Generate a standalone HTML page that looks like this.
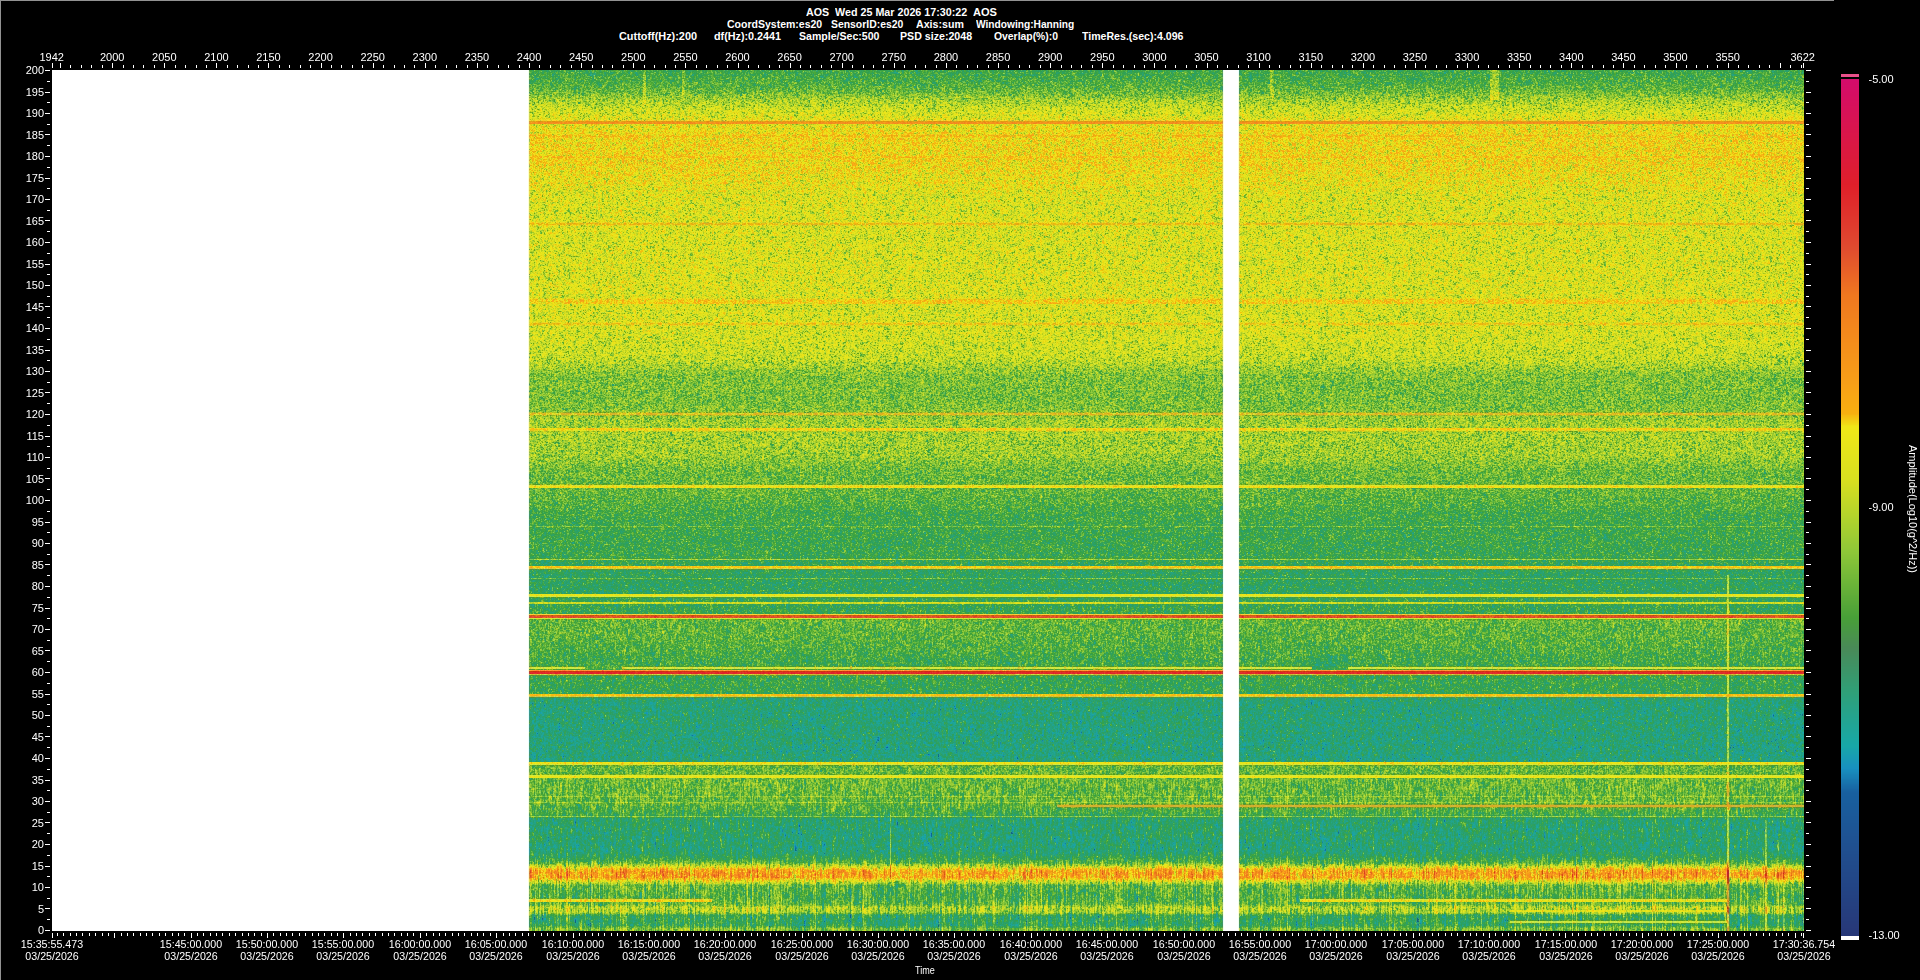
<!DOCTYPE html>
<html><head><meta charset="utf-8"><style>
html,body{margin:0;padding:0;background:#000;width:1920px;height:980px;overflow:hidden}
body{position:relative;font-family:"Liberation Sans",sans-serif;color:#fff}
.l{position:absolute;font-size:11px;line-height:12px;white-space:nowrap}
.b{position:absolute;font-size:11px;line-height:12px;font-weight:bold;white-space:nowrap}
#bt{position:absolute;left:0;top:0;width:1834px;height:1px;background:#929292}
#bl{position:absolute;left:0;top:0;width:1px;height:980px;background:#929292}
#plot{position:absolute;left:52px;top:70px;width:1752px;height:861px;background:linear-gradient(to right,#fff 0,#fff 477px,transparent 477px,transparent 1171px,#fff 1171px,#fff 1187px,transparent 1187px),linear-gradient(to bottom,rgb(65,167,77) 0px,rgb(72,169,72) 6px,rgb(80,173,71) 11px,rgb(91,177,64) 16px,rgb(99,180,61) 18px,rgb(106,183,61) 21px,rgb(115,187,59) 23px,rgb(127,191,55) 24px,rgb(140,196,51) 26px,rgb(151,200,48) 28px,rgb(164,205,45) 30px,rgb(172,208,44) 32px,rgb(179,211,42) 34px,rgb(192,216,40) 37px,rgb(200,217,35) 40px,rgb(209,216,32) 46px,rgb(232,203,41) 50px,rgb(225,155,21) 51px,rgb(244,143,30) 52px,rgb(217,213,30) 54px,rgb(224,211,28) 58px,rgb(234,204,28) 64px,rgb(236,192,22) 65px,rgb(234,203,27) 67px,rgb(227,206,27) 69px,rgb(242,193,23) 86px,rgb(229,207,27) 88px,rgb(221,209,28) 105px,rgb(214,214,31) 119px,rgb(204,216,34) 134px,rgb(211,217,32) 138px,rgb(222,210,33) 152px,rgb(231,191,22) 153px,rgb(222,210,32) 155px,rgb(208,217,33) 156px,rgb(216,213,31) 228px,rgb(227,205,26) 229px,rgb(238,201,24) 230px,rgb(206,217,33) 234px,rgb(219,212,31) 252px,rgb(230,201,24) 253px,rgb(212,210,32) 255px,rgb(200,216,35) 256px,rgb(193,215,37) 278px,rgb(185,212,39) 289px,rgb(178,210,41) 291px,rgb(169,206,43) 293px,rgb(159,203,46) 297px,rgb(152,202,51) 298px,rgb(143,197,52) 300px,rgb(130,193,56) 304px,rgb(123,190,56) 309px,rgb(116,186,56) 321px,rgb(123,190,56) 332px,rgb(130,193,55) 341px,rgb(157,183,37) 342px,rgb(219,195,40) 343px,rgb(164,186,37) 345px,rgb(142,197,52) 346px,rgb(149,200,50) 349px,rgb(157,202,47) 354px,rgb(241,209,22) 358px,rgb(224,214,36) 360px,rgb(177,198,32) 361px,rgb(160,203,46) 362px,rgb(153,201,48) 377px,rgb(145,198,51) 388px,rgb(135,194,53) 391px,rgb(126,191,56) 394px,rgb(118,187,56) 397px,rgb(108,183,60) 400px,rgb(126,175,32) 414px,rgb(215,225,52) 415px,rgb(238,219,23) 416px,rgb(102,182,62) 418px,rgb(94,179,64) 426px,rgb(84,174,67) 434px,rgb(76,171,71) 440px,rgb(68,168,75) 451px,rgb(110,189,69) 456px,rgb(77,168,63) 457px,rgb(67,168,78) 458px,rgb(79,163,55) 488px,rgb(154,211,71) 489px,rgb(57,165,86) 490px,rgb(245,198,19) 496px,rgb(208,208,62) 498px,rgb(90,153,50) 499px,rgb(50,163,94) 500px,rgb(103,188,77) 508px,rgb(61,162,76) 509px,rgb(51,163,95) 510px,rgb(232,227,26) 524px,rgb(203,233,71) 526px,rgb(82,158,47) 527px,rgb(56,165,89) 528px,rgb(203,219,36) 532px,rgb(59,165,85) 534px,rgb(250,205,57) 544px,rgb(202,97,14) 545px,rgb(227,79,44) 546px,rgb(203,229,59) 548px,rgb(111,171,35) 549px,rgb(102,182,62) 550px,rgb(95,179,64) 564px,rgb(86,175,66) 572px,rgb(78,173,71) 582px,rgb(70,169,75) 588px,rgb(93,161,41) 596px,rgb(202,224,63) 597px,rgb(93,160,42) 599px,rgb(255,150,54) 600px,rgb(208,55,15) 601px,rgb(224,41,44) 602px,rgb(207,193,58) 604px,rgb(98,153,48) 605px,rgb(60,166,86) 606px,rgb(246,194,19) 624px,rgb(205,205,69) 626px,rgb(82,151,67) 627px,rgb(41,162,116) 628px,rgb(38,162,123) 656px,rgb(43,162,113) 691px,rgb(236,222,24) 692px,rgb(212,227,57) 694px,rgb(111,169,34) 695px,rgb(103,182,62) 696px,rgb(123,176,32) 704px,rgb(213,232,55) 705px,rgb(234,227,25) 706px,rgb(108,183,59) 708px,rgb(145,203,60) 726px,rgb(110,180,50) 727px,rgb(101,181,62) 728px,rgb(144,202,61) 732px,rgb(109,179,51) 733px,rgb(106,177,59) 734px,rgb(120,177,59) 735px,rgb(95,172,62) 737px,rgb(84,175,70) 738px,rgb(77,172,72) 741px,rgb(68,169,80) 744px,rgb(127,199,78) 746px,rgb(65,161,72) 747px,rgb(44,162,110) 748px,rgb(48,163,101) 784px,rgb(54,164,92) 786px,rgb(62,166,81) 788px,rgb(75,170,70) 790px,rgb(84,176,74) 791px,rgb(95,176,61) 792px,rgb(115,189,65) 793px,rgb(153,198,45) 794px,rgb(168,207,48) 795px,rgb(200,209,34) 796px,rgb(210,211,34) 797px,rgb(233,194,29) 798px,rgb(233,183,25) 799px,rgb(239,172,29) 800px,rgb(240,160,28) 802px,rgb(233,187,25) 808px,rgb(233,195,29) 809px,rgb(213,209,32) 810px,rgb(206,210,33) 811px,rgb(176,208,45) 812px,rgb(163,202,43) 813px,rgb(125,193,63) 814px,rgb(105,180,58) 815px,rgb(99,180,66) 816px,rgb(92,178,69) 820px,rgb(85,175,71) 824px,rgb(94,174,63) 828px,rgb(117,186,67) 829px,rgb(129,186,57) 830px,rgb(98,180,65) 832px,rgb(110,182,57) 834px,rgb(129,194,61) 835px,rgb(158,200,44) 836px,rgb(172,208,47) 837px,rgb(164,204,46) 840px,rgb(153,204,56) 842px,rgb(125,187,49) 843px,rgb(81,176,81) 844px,rgb(63,165,82) 845px,rgb(59,166,92) 846px,rgb(79,171,72) 856px,rgb(93,180,73) 857px,rgb(123,190,57) 858px,rgb(118,188,59) 860px)}
#cv{position:absolute;left:52px;top:70px;filter:blur(0.35px)}
#cbar{position:absolute;left:1841px;top:79px;width:18px;height:857px;background:linear-gradient(to bottom,rgb(212,12,108) 0px,rgb(214,15,95) 20px,rgb(216,19,83) 40px,rgb(218,23,70) 60px,rgb(221,27,58) 80px,rgb(223,30,45) 100px,rgb(224,41,43) 120px,rgb(224,55,45) 140px,rgb(224,69,47) 160px,rgb(228,86,43) 180px,rgb(234,105,37) 200px,rgb(240,121,31) 220px,rgb(242,131,29) 240px,rgb(244,140,27) 260px,rgb(245,149,26) 280px,rgb(247,158,24) 300px,rgb(248,168,19) 320px,rgb(244,200,19) 340px,rgb(234,230,25) 360px,rgb(225,227,28) 380px,rgb(216,224,31) 400px,rgb(196,217,38) 420px,rgb(175,210,45) 440px,rgb(154,203,52) 460px,rgb(133,194,56) 480px,rgb(112,182,56) 500px,rgb(92,171,56) 520px,rgb(72,159,57) 540px,rgb(73,144,78) 560px,rgb(67,143,96) 580px,rgb(55,153,111) 600px,rgb(44,161,127) 620px,rgb(35,164,144) 640px,rgb(26,167,162) 660px,rgb(24,153,182) 680px,rgb(24,121,176) 700px,rgb(24,94,158) 720px,rgb(27,88,152) 740px,rgb(30,82,146) 760px,rgb(33,76,140) 780px,rgb(34,71,135) 800px,rgb(36,65,129) 820px,rgb(38,60,124) 840px,rgb(40,56,120) 857px)}
</style></head><body>
<div id="bt"></div><div id="bl"></div>
<div class="b" style="left:805.5px;top:6px;transform:scaleX(0.9688);transform-origin:0 0">AOS</div>
<div class="b" style="left:834.9px;top:6px;transform:scaleX(0.9760);transform-origin:0 0">Wed 25 Mar 2026 17:30:22</div>
<div class="b" style="left:972.9px;top:6px;transform:scaleX(1.0066);transform-origin:0 0">AOS</div>
<div class="b" style="left:727.2px;top:18px;transform:scaleX(0.9553);transform-origin:0 0">CoordSystem:es20</div>
<div class="b" style="left:831.3px;top:18px;transform:scaleX(0.9459);transform-origin:0 0">SensorID:es20</div>
<div class="b" style="left:915.6px;top:18px;transform:scaleX(0.9671);transform-origin:0 0">Axis:sum</div>
<div class="b" style="left:975.5px;top:18px;transform:scaleX(0.9254);transform-origin:0 0">Windowing:Hanning</div>
<div class="b" style="left:618.7px;top:30px;transform:scaleX(0.9901);transform-origin:0 0">Cuttoff(Hz):200</div>
<div class="b" style="left:714.2px;top:30px;transform:scaleX(0.9800);transform-origin:0 0">df(Hz):0.2441</div>
<div class="b" style="left:799.3px;top:30px;transform:scaleX(0.9596);transform-origin:0 0">Sample/Sec:500</div>
<div class="b" style="left:900.3px;top:30px;transform:scaleX(0.9664);transform-origin:0 0">PSD size:2048</div>
<div class="b" style="left:993.7px;top:30px;transform:scaleX(0.9431);transform-origin:0 0">Overlap(%):0</div>
<div class="b" style="left:1082.2px;top:30px;transform:scaleX(0.9612);transform-origin:0 0">TimeRes.(sec):4.096</div>
<div id="plot"></div>
<canvas id="cv" width="1752" height="861"></canvas>
<canvas id="cbar" width="18" height="857"></canvas>
<div style="position:absolute;left:1841px;top:74px;width:18px;height:3px;background:#e8508a"></div>
<div style="position:absolute;left:1841px;top:936px;width:18px;height:4px;background:#fff"></div>
<svg width="1920" height="980" style="position:absolute;left:0;top:0">
<rect x="52" y="63" width="1" height="5" fill="#fff"/>
<rect x="60" y="63" width="1" height="5" fill="#fff"/>
<rect x="70" y="65" width="1" height="3" fill="#fff"/>
<rect x="81" y="65" width="1" height="3" fill="#fff"/>
<rect x="91" y="65" width="1" height="3" fill="#fff"/>
<rect x="102" y="65" width="1" height="3" fill="#fff"/>
<rect x="112" y="63" width="1" height="5" fill="#fff"/>
<rect x="123" y="65" width="1" height="3" fill="#fff"/>
<rect x="133" y="65" width="1" height="3" fill="#fff"/>
<rect x="143" y="65" width="1" height="3" fill="#fff"/>
<rect x="154" y="65" width="1" height="3" fill="#fff"/>
<rect x="164" y="63" width="1" height="5" fill="#fff"/>
<rect x="175" y="65" width="1" height="3" fill="#fff"/>
<rect x="185" y="65" width="1" height="3" fill="#fff"/>
<rect x="196" y="65" width="1" height="3" fill="#fff"/>
<rect x="206" y="65" width="1" height="3" fill="#fff"/>
<rect x="216" y="63" width="1" height="5" fill="#fff"/>
<rect x="227" y="65" width="1" height="3" fill="#fff"/>
<rect x="237" y="65" width="1" height="3" fill="#fff"/>
<rect x="248" y="65" width="1" height="3" fill="#fff"/>
<rect x="258" y="65" width="1" height="3" fill="#fff"/>
<rect x="268" y="63" width="1" height="5" fill="#fff"/>
<rect x="279" y="65" width="1" height="3" fill="#fff"/>
<rect x="289" y="65" width="1" height="3" fill="#fff"/>
<rect x="300" y="65" width="1" height="3" fill="#fff"/>
<rect x="310" y="65" width="1" height="3" fill="#fff"/>
<rect x="321" y="63" width="1" height="5" fill="#fff"/>
<rect x="331" y="65" width="1" height="3" fill="#fff"/>
<rect x="341" y="65" width="1" height="3" fill="#fff"/>
<rect x="352" y="65" width="1" height="3" fill="#fff"/>
<rect x="362" y="65" width="1" height="3" fill="#fff"/>
<rect x="373" y="63" width="1" height="5" fill="#fff"/>
<rect x="383" y="65" width="1" height="3" fill="#fff"/>
<rect x="394" y="65" width="1" height="3" fill="#fff"/>
<rect x="404" y="65" width="1" height="3" fill="#fff"/>
<rect x="414" y="65" width="1" height="3" fill="#fff"/>
<rect x="425" y="63" width="1" height="5" fill="#fff"/>
<rect x="435" y="65" width="1" height="3" fill="#fff"/>
<rect x="446" y="65" width="1" height="3" fill="#fff"/>
<rect x="456" y="65" width="1" height="3" fill="#fff"/>
<rect x="467" y="65" width="1" height="3" fill="#fff"/>
<rect x="477" y="63" width="1" height="5" fill="#fff"/>
<rect x="487" y="65" width="1" height="3" fill="#fff"/>
<rect x="498" y="65" width="1" height="3" fill="#fff"/>
<rect x="508" y="65" width="1" height="3" fill="#fff"/>
<rect x="519" y="65" width="1" height="3" fill="#fff"/>
<rect x="529" y="63" width="1" height="5" fill="#fff"/>
<rect x="539" y="65" width="1" height="3" fill="#fff"/>
<rect x="550" y="65" width="1" height="3" fill="#fff"/>
<rect x="560" y="65" width="1" height="3" fill="#fff"/>
<rect x="571" y="65" width="1" height="3" fill="#fff"/>
<rect x="581" y="63" width="1" height="5" fill="#fff"/>
<rect x="592" y="65" width="1" height="3" fill="#fff"/>
<rect x="602" y="65" width="1" height="3" fill="#fff"/>
<rect x="612" y="65" width="1" height="3" fill="#fff"/>
<rect x="623" y="65" width="1" height="3" fill="#fff"/>
<rect x="633" y="63" width="1" height="5" fill="#fff"/>
<rect x="644" y="65" width="1" height="3" fill="#fff"/>
<rect x="654" y="65" width="1" height="3" fill="#fff"/>
<rect x="665" y="65" width="1" height="3" fill="#fff"/>
<rect x="675" y="65" width="1" height="3" fill="#fff"/>
<rect x="685" y="63" width="1" height="5" fill="#fff"/>
<rect x="696" y="65" width="1" height="3" fill="#fff"/>
<rect x="706" y="65" width="1" height="3" fill="#fff"/>
<rect x="717" y="65" width="1" height="3" fill="#fff"/>
<rect x="727" y="65" width="1" height="3" fill="#fff"/>
<rect x="738" y="63" width="1" height="5" fill="#fff"/>
<rect x="748" y="65" width="1" height="3" fill="#fff"/>
<rect x="758" y="65" width="1" height="3" fill="#fff"/>
<rect x="769" y="65" width="1" height="3" fill="#fff"/>
<rect x="779" y="65" width="1" height="3" fill="#fff"/>
<rect x="790" y="63" width="1" height="5" fill="#fff"/>
<rect x="800" y="65" width="1" height="3" fill="#fff"/>
<rect x="810" y="65" width="1" height="3" fill="#fff"/>
<rect x="821" y="65" width="1" height="3" fill="#fff"/>
<rect x="831" y="65" width="1" height="3" fill="#fff"/>
<rect x="842" y="63" width="1" height="5" fill="#fff"/>
<rect x="852" y="65" width="1" height="3" fill="#fff"/>
<rect x="863" y="65" width="1" height="3" fill="#fff"/>
<rect x="873" y="65" width="1" height="3" fill="#fff"/>
<rect x="883" y="65" width="1" height="3" fill="#fff"/>
<rect x="894" y="63" width="1" height="5" fill="#fff"/>
<rect x="904" y="65" width="1" height="3" fill="#fff"/>
<rect x="915" y="65" width="1" height="3" fill="#fff"/>
<rect x="925" y="65" width="1" height="3" fill="#fff"/>
<rect x="936" y="65" width="1" height="3" fill="#fff"/>
<rect x="946" y="63" width="1" height="5" fill="#fff"/>
<rect x="956" y="65" width="1" height="3" fill="#fff"/>
<rect x="967" y="65" width="1" height="3" fill="#fff"/>
<rect x="977" y="65" width="1" height="3" fill="#fff"/>
<rect x="988" y="65" width="1" height="3" fill="#fff"/>
<rect x="998" y="63" width="1" height="5" fill="#fff"/>
<rect x="1008" y="65" width="1" height="3" fill="#fff"/>
<rect x="1019" y="65" width="1" height="3" fill="#fff"/>
<rect x="1029" y="65" width="1" height="3" fill="#fff"/>
<rect x="1040" y="65" width="1" height="3" fill="#fff"/>
<rect x="1050" y="63" width="1" height="5" fill="#fff"/>
<rect x="1061" y="65" width="1" height="3" fill="#fff"/>
<rect x="1071" y="65" width="1" height="3" fill="#fff"/>
<rect x="1081" y="65" width="1" height="3" fill="#fff"/>
<rect x="1092" y="65" width="1" height="3" fill="#fff"/>
<rect x="1102" y="63" width="1" height="5" fill="#fff"/>
<rect x="1113" y="65" width="1" height="3" fill="#fff"/>
<rect x="1123" y="65" width="1" height="3" fill="#fff"/>
<rect x="1134" y="65" width="1" height="3" fill="#fff"/>
<rect x="1144" y="65" width="1" height="3" fill="#fff"/>
<rect x="1154" y="63" width="1" height="5" fill="#fff"/>
<rect x="1165" y="65" width="1" height="3" fill="#fff"/>
<rect x="1175" y="65" width="1" height="3" fill="#fff"/>
<rect x="1186" y="65" width="1" height="3" fill="#fff"/>
<rect x="1196" y="65" width="1" height="3" fill="#fff"/>
<rect x="1207" y="63" width="1" height="5" fill="#fff"/>
<rect x="1217" y="65" width="1" height="3" fill="#fff"/>
<rect x="1227" y="65" width="1" height="3" fill="#fff"/>
<rect x="1238" y="65" width="1" height="3" fill="#fff"/>
<rect x="1248" y="65" width="1" height="3" fill="#fff"/>
<rect x="1259" y="63" width="1" height="5" fill="#fff"/>
<rect x="1269" y="65" width="1" height="3" fill="#fff"/>
<rect x="1279" y="65" width="1" height="3" fill="#fff"/>
<rect x="1290" y="65" width="1" height="3" fill="#fff"/>
<rect x="1300" y="65" width="1" height="3" fill="#fff"/>
<rect x="1311" y="63" width="1" height="5" fill="#fff"/>
<rect x="1321" y="65" width="1" height="3" fill="#fff"/>
<rect x="1332" y="65" width="1" height="3" fill="#fff"/>
<rect x="1342" y="65" width="1" height="3" fill="#fff"/>
<rect x="1352" y="65" width="1" height="3" fill="#fff"/>
<rect x="1363" y="63" width="1" height="5" fill="#fff"/>
<rect x="1373" y="65" width="1" height="3" fill="#fff"/>
<rect x="1384" y="65" width="1" height="3" fill="#fff"/>
<rect x="1394" y="65" width="1" height="3" fill="#fff"/>
<rect x="1405" y="65" width="1" height="3" fill="#fff"/>
<rect x="1415" y="63" width="1" height="5" fill="#fff"/>
<rect x="1425" y="65" width="1" height="3" fill="#fff"/>
<rect x="1436" y="65" width="1" height="3" fill="#fff"/>
<rect x="1446" y="65" width="1" height="3" fill="#fff"/>
<rect x="1457" y="65" width="1" height="3" fill="#fff"/>
<rect x="1467" y="63" width="1" height="5" fill="#fff"/>
<rect x="1478" y="65" width="1" height="3" fill="#fff"/>
<rect x="1488" y="65" width="1" height="3" fill="#fff"/>
<rect x="1498" y="65" width="1" height="3" fill="#fff"/>
<rect x="1509" y="65" width="1" height="3" fill="#fff"/>
<rect x="1519" y="63" width="1" height="5" fill="#fff"/>
<rect x="1530" y="65" width="1" height="3" fill="#fff"/>
<rect x="1540" y="65" width="1" height="3" fill="#fff"/>
<rect x="1550" y="65" width="1" height="3" fill="#fff"/>
<rect x="1561" y="65" width="1" height="3" fill="#fff"/>
<rect x="1571" y="63" width="1" height="5" fill="#fff"/>
<rect x="1582" y="65" width="1" height="3" fill="#fff"/>
<rect x="1592" y="65" width="1" height="3" fill="#fff"/>
<rect x="1603" y="65" width="1" height="3" fill="#fff"/>
<rect x="1613" y="65" width="1" height="3" fill="#fff"/>
<rect x="1623" y="63" width="1" height="5" fill="#fff"/>
<rect x="1634" y="65" width="1" height="3" fill="#fff"/>
<rect x="1644" y="65" width="1" height="3" fill="#fff"/>
<rect x="1655" y="65" width="1" height="3" fill="#fff"/>
<rect x="1665" y="65" width="1" height="3" fill="#fff"/>
<rect x="1676" y="63" width="1" height="5" fill="#fff"/>
<rect x="1686" y="65" width="1" height="3" fill="#fff"/>
<rect x="1696" y="65" width="1" height="3" fill="#fff"/>
<rect x="1707" y="65" width="1" height="3" fill="#fff"/>
<rect x="1717" y="65" width="1" height="3" fill="#fff"/>
<rect x="1728" y="63" width="1" height="5" fill="#fff"/>
<rect x="1738" y="65" width="1" height="3" fill="#fff"/>
<rect x="1748" y="65" width="1" height="3" fill="#fff"/>
<rect x="1759" y="65" width="1" height="3" fill="#fff"/>
<rect x="1769" y="65" width="1" height="3" fill="#fff"/>
<rect x="1780" y="63" width="1" height="5" fill="#fff"/>
<rect x="1790" y="65" width="1" height="3" fill="#fff"/>
<rect x="1801" y="65" width="1" height="3" fill="#fff"/>
<rect x="1803" y="63" width="1" height="5" fill="#fff"/>
<rect x="45" y="930" width="5" height="1" fill="#fff"/>
<rect x="47" y="919" width="3" height="1" fill="#fff"/>
<rect x="45" y="908" width="5" height="1" fill="#fff"/>
<rect x="47" y="898" width="3" height="1" fill="#fff"/>
<rect x="45" y="887" width="5" height="1" fill="#fff"/>
<rect x="47" y="876" width="3" height="1" fill="#fff"/>
<rect x="45" y="866" width="5" height="1" fill="#fff"/>
<rect x="47" y="855" width="3" height="1" fill="#fff"/>
<rect x="45" y="844" width="5" height="1" fill="#fff"/>
<rect x="47" y="833" width="3" height="1" fill="#fff"/>
<rect x="45" y="822" width="5" height="1" fill="#fff"/>
<rect x="47" y="812" width="3" height="1" fill="#fff"/>
<rect x="45" y="801" width="5" height="1" fill="#fff"/>
<rect x="47" y="790" width="3" height="1" fill="#fff"/>
<rect x="45" y="780" width="5" height="1" fill="#fff"/>
<rect x="47" y="769" width="3" height="1" fill="#fff"/>
<rect x="45" y="758" width="5" height="1" fill="#fff"/>
<rect x="47" y="747" width="3" height="1" fill="#fff"/>
<rect x="45" y="736" width="5" height="1" fill="#fff"/>
<rect x="47" y="726" width="3" height="1" fill="#fff"/>
<rect x="45" y="715" width="5" height="1" fill="#fff"/>
<rect x="47" y="704" width="3" height="1" fill="#fff"/>
<rect x="45" y="694" width="5" height="1" fill="#fff"/>
<rect x="47" y="683" width="3" height="1" fill="#fff"/>
<rect x="45" y="672" width="5" height="1" fill="#fff"/>
<rect x="47" y="661" width="3" height="1" fill="#fff"/>
<rect x="45" y="650" width="5" height="1" fill="#fff"/>
<rect x="47" y="640" width="3" height="1" fill="#fff"/>
<rect x="45" y="629" width="5" height="1" fill="#fff"/>
<rect x="47" y="618" width="3" height="1" fill="#fff"/>
<rect x="45" y="608" width="5" height="1" fill="#fff"/>
<rect x="47" y="597" width="3" height="1" fill="#fff"/>
<rect x="45" y="586" width="5" height="1" fill="#fff"/>
<rect x="47" y="575" width="3" height="1" fill="#fff"/>
<rect x="45" y="564" width="5" height="1" fill="#fff"/>
<rect x="47" y="554" width="3" height="1" fill="#fff"/>
<rect x="45" y="543" width="5" height="1" fill="#fff"/>
<rect x="47" y="532" width="3" height="1" fill="#fff"/>
<rect x="45" y="522" width="5" height="1" fill="#fff"/>
<rect x="47" y="511" width="3" height="1" fill="#fff"/>
<rect x="45" y="500" width="5" height="1" fill="#fff"/>
<rect x="47" y="489" width="3" height="1" fill="#fff"/>
<rect x="45" y="478" width="5" height="1" fill="#fff"/>
<rect x="47" y="468" width="3" height="1" fill="#fff"/>
<rect x="45" y="457" width="5" height="1" fill="#fff"/>
<rect x="47" y="446" width="3" height="1" fill="#fff"/>
<rect x="45" y="436" width="5" height="1" fill="#fff"/>
<rect x="47" y="425" width="3" height="1" fill="#fff"/>
<rect x="45" y="414" width="5" height="1" fill="#fff"/>
<rect x="47" y="403" width="3" height="1" fill="#fff"/>
<rect x="45" y="392" width="5" height="1" fill="#fff"/>
<rect x="47" y="382" width="3" height="1" fill="#fff"/>
<rect x="45" y="371" width="5" height="1" fill="#fff"/>
<rect x="47" y="360" width="3" height="1" fill="#fff"/>
<rect x="45" y="350" width="5" height="1" fill="#fff"/>
<rect x="47" y="339" width="3" height="1" fill="#fff"/>
<rect x="45" y="328" width="5" height="1" fill="#fff"/>
<rect x="47" y="317" width="3" height="1" fill="#fff"/>
<rect x="45" y="306" width="5" height="1" fill="#fff"/>
<rect x="47" y="296" width="3" height="1" fill="#fff"/>
<rect x="45" y="285" width="5" height="1" fill="#fff"/>
<rect x="47" y="274" width="3" height="1" fill="#fff"/>
<rect x="45" y="264" width="5" height="1" fill="#fff"/>
<rect x="47" y="253" width="3" height="1" fill="#fff"/>
<rect x="45" y="242" width="5" height="1" fill="#fff"/>
<rect x="47" y="231" width="3" height="1" fill="#fff"/>
<rect x="45" y="220" width="5" height="1" fill="#fff"/>
<rect x="47" y="210" width="3" height="1" fill="#fff"/>
<rect x="45" y="199" width="5" height="1" fill="#fff"/>
<rect x="47" y="188" width="3" height="1" fill="#fff"/>
<rect x="45" y="178" width="5" height="1" fill="#fff"/>
<rect x="47" y="167" width="3" height="1" fill="#fff"/>
<rect x="45" y="156" width="5" height="1" fill="#fff"/>
<rect x="47" y="145" width="3" height="1" fill="#fff"/>
<rect x="45" y="134" width="5" height="1" fill="#fff"/>
<rect x="47" y="124" width="3" height="1" fill="#fff"/>
<rect x="45" y="113" width="5" height="1" fill="#fff"/>
<rect x="47" y="102" width="3" height="1" fill="#fff"/>
<rect x="45" y="92" width="5" height="1" fill="#fff"/>
<rect x="47" y="81" width="3" height="1" fill="#fff"/>
<rect x="45" y="70" width="5" height="1" fill="#fff"/>
<rect x="1806" y="930" width="5" height="1" fill="#fff"/>
<rect x="1806" y="919" width="3" height="1" fill="#fff"/>
<rect x="1806" y="908" width="5" height="1" fill="#fff"/>
<rect x="1806" y="898" width="3" height="1" fill="#fff"/>
<rect x="1806" y="887" width="5" height="1" fill="#fff"/>
<rect x="1806" y="876" width="3" height="1" fill="#fff"/>
<rect x="1806" y="866" width="5" height="1" fill="#fff"/>
<rect x="1806" y="855" width="3" height="1" fill="#fff"/>
<rect x="1806" y="844" width="5" height="1" fill="#fff"/>
<rect x="1806" y="833" width="3" height="1" fill="#fff"/>
<rect x="1806" y="822" width="5" height="1" fill="#fff"/>
<rect x="1806" y="812" width="3" height="1" fill="#fff"/>
<rect x="1806" y="801" width="5" height="1" fill="#fff"/>
<rect x="1806" y="790" width="3" height="1" fill="#fff"/>
<rect x="1806" y="780" width="5" height="1" fill="#fff"/>
<rect x="1806" y="769" width="3" height="1" fill="#fff"/>
<rect x="1806" y="758" width="5" height="1" fill="#fff"/>
<rect x="1806" y="747" width="3" height="1" fill="#fff"/>
<rect x="1806" y="736" width="5" height="1" fill="#fff"/>
<rect x="1806" y="726" width="3" height="1" fill="#fff"/>
<rect x="1806" y="715" width="5" height="1" fill="#fff"/>
<rect x="1806" y="704" width="3" height="1" fill="#fff"/>
<rect x="1806" y="694" width="5" height="1" fill="#fff"/>
<rect x="1806" y="683" width="3" height="1" fill="#fff"/>
<rect x="1806" y="672" width="5" height="1" fill="#fff"/>
<rect x="1806" y="661" width="3" height="1" fill="#fff"/>
<rect x="1806" y="650" width="5" height="1" fill="#fff"/>
<rect x="1806" y="640" width="3" height="1" fill="#fff"/>
<rect x="1806" y="629" width="5" height="1" fill="#fff"/>
<rect x="1806" y="618" width="3" height="1" fill="#fff"/>
<rect x="1806" y="608" width="5" height="1" fill="#fff"/>
<rect x="1806" y="597" width="3" height="1" fill="#fff"/>
<rect x="1806" y="586" width="5" height="1" fill="#fff"/>
<rect x="1806" y="575" width="3" height="1" fill="#fff"/>
<rect x="1806" y="564" width="5" height="1" fill="#fff"/>
<rect x="1806" y="554" width="3" height="1" fill="#fff"/>
<rect x="1806" y="543" width="5" height="1" fill="#fff"/>
<rect x="1806" y="532" width="3" height="1" fill="#fff"/>
<rect x="1806" y="522" width="5" height="1" fill="#fff"/>
<rect x="1806" y="511" width="3" height="1" fill="#fff"/>
<rect x="1806" y="500" width="5" height="1" fill="#fff"/>
<rect x="1806" y="489" width="3" height="1" fill="#fff"/>
<rect x="1806" y="478" width="5" height="1" fill="#fff"/>
<rect x="1806" y="468" width="3" height="1" fill="#fff"/>
<rect x="1806" y="457" width="5" height="1" fill="#fff"/>
<rect x="1806" y="446" width="3" height="1" fill="#fff"/>
<rect x="1806" y="436" width="5" height="1" fill="#fff"/>
<rect x="1806" y="425" width="3" height="1" fill="#fff"/>
<rect x="1806" y="414" width="5" height="1" fill="#fff"/>
<rect x="1806" y="403" width="3" height="1" fill="#fff"/>
<rect x="1806" y="392" width="5" height="1" fill="#fff"/>
<rect x="1806" y="382" width="3" height="1" fill="#fff"/>
<rect x="1806" y="371" width="5" height="1" fill="#fff"/>
<rect x="1806" y="360" width="3" height="1" fill="#fff"/>
<rect x="1806" y="350" width="5" height="1" fill="#fff"/>
<rect x="1806" y="339" width="3" height="1" fill="#fff"/>
<rect x="1806" y="328" width="5" height="1" fill="#fff"/>
<rect x="1806" y="317" width="3" height="1" fill="#fff"/>
<rect x="1806" y="306" width="5" height="1" fill="#fff"/>
<rect x="1806" y="296" width="3" height="1" fill="#fff"/>
<rect x="1806" y="285" width="5" height="1" fill="#fff"/>
<rect x="1806" y="274" width="3" height="1" fill="#fff"/>
<rect x="1806" y="264" width="5" height="1" fill="#fff"/>
<rect x="1806" y="253" width="3" height="1" fill="#fff"/>
<rect x="1806" y="242" width="5" height="1" fill="#fff"/>
<rect x="1806" y="231" width="3" height="1" fill="#fff"/>
<rect x="1806" y="220" width="5" height="1" fill="#fff"/>
<rect x="1806" y="210" width="3" height="1" fill="#fff"/>
<rect x="1806" y="199" width="5" height="1" fill="#fff"/>
<rect x="1806" y="188" width="3" height="1" fill="#fff"/>
<rect x="1806" y="178" width="5" height="1" fill="#fff"/>
<rect x="1806" y="167" width="3" height="1" fill="#fff"/>
<rect x="1806" y="156" width="5" height="1" fill="#fff"/>
<rect x="1806" y="145" width="3" height="1" fill="#fff"/>
<rect x="1806" y="134" width="5" height="1" fill="#fff"/>
<rect x="1806" y="124" width="3" height="1" fill="#fff"/>
<rect x="1806" y="113" width="5" height="1" fill="#fff"/>
<rect x="1806" y="102" width="3" height="1" fill="#fff"/>
<rect x="1806" y="92" width="5" height="1" fill="#fff"/>
<rect x="1806" y="81" width="3" height="1" fill="#fff"/>
<rect x="1806" y="70" width="5" height="1" fill="#fff"/>
<rect x="52" y="933" width="1" height="5" fill="#fff"/>
<rect x="57" y="933" width="1" height="3" fill="#fff"/>
<rect x="63" y="933" width="1" height="3" fill="#fff"/>
<rect x="70" y="933" width="1" height="3" fill="#fff"/>
<rect x="76" y="933" width="1" height="3" fill="#fff"/>
<rect x="82" y="933" width="1" height="3" fill="#fff"/>
<rect x="89" y="933" width="1" height="3" fill="#fff"/>
<rect x="95" y="933" width="1" height="3" fill="#fff"/>
<rect x="102" y="933" width="1" height="3" fill="#fff"/>
<rect x="108" y="933" width="1" height="3" fill="#fff"/>
<rect x="114" y="933" width="1" height="5" fill="#fff"/>
<rect x="121" y="933" width="1" height="3" fill="#fff"/>
<rect x="127" y="933" width="1" height="3" fill="#fff"/>
<rect x="133" y="933" width="1" height="3" fill="#fff"/>
<rect x="140" y="933" width="1" height="3" fill="#fff"/>
<rect x="146" y="933" width="1" height="3" fill="#fff"/>
<rect x="152" y="933" width="1" height="3" fill="#fff"/>
<rect x="159" y="933" width="1" height="3" fill="#fff"/>
<rect x="165" y="933" width="1" height="3" fill="#fff"/>
<rect x="172" y="933" width="1" height="3" fill="#fff"/>
<rect x="178" y="933" width="1" height="3" fill="#fff"/>
<rect x="184" y="933" width="1" height="3" fill="#fff"/>
<rect x="191" y="933" width="1" height="5" fill="#fff"/>
<rect x="197" y="933" width="1" height="3" fill="#fff"/>
<rect x="203" y="933" width="1" height="3" fill="#fff"/>
<rect x="210" y="933" width="1" height="3" fill="#fff"/>
<rect x="216" y="933" width="1" height="3" fill="#fff"/>
<rect x="222" y="933" width="1" height="3" fill="#fff"/>
<rect x="229" y="933" width="1" height="3" fill="#fff"/>
<rect x="235" y="933" width="1" height="3" fill="#fff"/>
<rect x="242" y="933" width="1" height="3" fill="#fff"/>
<rect x="248" y="933" width="1" height="3" fill="#fff"/>
<rect x="254" y="933" width="1" height="3" fill="#fff"/>
<rect x="261" y="933" width="1" height="3" fill="#fff"/>
<rect x="267" y="933" width="1" height="5" fill="#fff"/>
<rect x="273" y="933" width="1" height="3" fill="#fff"/>
<rect x="280" y="933" width="1" height="3" fill="#fff"/>
<rect x="286" y="933" width="1" height="3" fill="#fff"/>
<rect x="292" y="933" width="1" height="3" fill="#fff"/>
<rect x="299" y="933" width="1" height="3" fill="#fff"/>
<rect x="305" y="933" width="1" height="3" fill="#fff"/>
<rect x="312" y="933" width="1" height="3" fill="#fff"/>
<rect x="318" y="933" width="1" height="3" fill="#fff"/>
<rect x="324" y="933" width="1" height="3" fill="#fff"/>
<rect x="331" y="933" width="1" height="3" fill="#fff"/>
<rect x="337" y="933" width="1" height="3" fill="#fff"/>
<rect x="343" y="933" width="1" height="5" fill="#fff"/>
<rect x="350" y="933" width="1" height="3" fill="#fff"/>
<rect x="356" y="933" width="1" height="3" fill="#fff"/>
<rect x="362" y="933" width="1" height="3" fill="#fff"/>
<rect x="369" y="933" width="1" height="3" fill="#fff"/>
<rect x="375" y="933" width="1" height="3" fill="#fff"/>
<rect x="382" y="933" width="1" height="3" fill="#fff"/>
<rect x="388" y="933" width="1" height="3" fill="#fff"/>
<rect x="394" y="933" width="1" height="3" fill="#fff"/>
<rect x="401" y="933" width="1" height="3" fill="#fff"/>
<rect x="407" y="933" width="1" height="3" fill="#fff"/>
<rect x="413" y="933" width="1" height="3" fill="#fff"/>
<rect x="420" y="933" width="1" height="5" fill="#fff"/>
<rect x="426" y="933" width="1" height="3" fill="#fff"/>
<rect x="433" y="933" width="1" height="3" fill="#fff"/>
<rect x="439" y="933" width="1" height="3" fill="#fff"/>
<rect x="445" y="933" width="1" height="3" fill="#fff"/>
<rect x="452" y="933" width="1" height="3" fill="#fff"/>
<rect x="458" y="933" width="1" height="3" fill="#fff"/>
<rect x="464" y="933" width="1" height="3" fill="#fff"/>
<rect x="471" y="933" width="1" height="3" fill="#fff"/>
<rect x="477" y="933" width="1" height="3" fill="#fff"/>
<rect x="483" y="933" width="1" height="3" fill="#fff"/>
<rect x="490" y="933" width="1" height="3" fill="#fff"/>
<rect x="496" y="933" width="1" height="5" fill="#fff"/>
<rect x="503" y="933" width="1" height="3" fill="#fff"/>
<rect x="509" y="933" width="1" height="3" fill="#fff"/>
<rect x="515" y="933" width="1" height="3" fill="#fff"/>
<rect x="522" y="933" width="1" height="3" fill="#fff"/>
<rect x="528" y="933" width="1" height="3" fill="#fff"/>
<rect x="534" y="933" width="1" height="3" fill="#fff"/>
<rect x="541" y="933" width="1" height="3" fill="#fff"/>
<rect x="547" y="933" width="1" height="3" fill="#fff"/>
<rect x="553" y="933" width="1" height="3" fill="#fff"/>
<rect x="560" y="933" width="1" height="3" fill="#fff"/>
<rect x="566" y="933" width="1" height="3" fill="#fff"/>
<rect x="573" y="933" width="1" height="5" fill="#fff"/>
<rect x="579" y="933" width="1" height="3" fill="#fff"/>
<rect x="585" y="933" width="1" height="3" fill="#fff"/>
<rect x="592" y="933" width="1" height="3" fill="#fff"/>
<rect x="598" y="933" width="1" height="3" fill="#fff"/>
<rect x="604" y="933" width="1" height="3" fill="#fff"/>
<rect x="611" y="933" width="1" height="3" fill="#fff"/>
<rect x="617" y="933" width="1" height="3" fill="#fff"/>
<rect x="623" y="933" width="1" height="3" fill="#fff"/>
<rect x="630" y="933" width="1" height="3" fill="#fff"/>
<rect x="636" y="933" width="1" height="3" fill="#fff"/>
<rect x="643" y="933" width="1" height="3" fill="#fff"/>
<rect x="649" y="933" width="1" height="5" fill="#fff"/>
<rect x="655" y="933" width="1" height="3" fill="#fff"/>
<rect x="662" y="933" width="1" height="3" fill="#fff"/>
<rect x="668" y="933" width="1" height="3" fill="#fff"/>
<rect x="674" y="933" width="1" height="3" fill="#fff"/>
<rect x="681" y="933" width="1" height="3" fill="#fff"/>
<rect x="687" y="933" width="1" height="3" fill="#fff"/>
<rect x="693" y="933" width="1" height="3" fill="#fff"/>
<rect x="700" y="933" width="1" height="3" fill="#fff"/>
<rect x="706" y="933" width="1" height="3" fill="#fff"/>
<rect x="713" y="933" width="1" height="3" fill="#fff"/>
<rect x="719" y="933" width="1" height="3" fill="#fff"/>
<rect x="725" y="933" width="1" height="5" fill="#fff"/>
<rect x="732" y="933" width="1" height="3" fill="#fff"/>
<rect x="738" y="933" width="1" height="3" fill="#fff"/>
<rect x="744" y="933" width="1" height="3" fill="#fff"/>
<rect x="751" y="933" width="1" height="3" fill="#fff"/>
<rect x="757" y="933" width="1" height="3" fill="#fff"/>
<rect x="763" y="933" width="1" height="3" fill="#fff"/>
<rect x="770" y="933" width="1" height="3" fill="#fff"/>
<rect x="776" y="933" width="1" height="3" fill="#fff"/>
<rect x="783" y="933" width="1" height="3" fill="#fff"/>
<rect x="789" y="933" width="1" height="3" fill="#fff"/>
<rect x="795" y="933" width="1" height="3" fill="#fff"/>
<rect x="802" y="933" width="1" height="5" fill="#fff"/>
<rect x="808" y="933" width="1" height="3" fill="#fff"/>
<rect x="814" y="933" width="1" height="3" fill="#fff"/>
<rect x="821" y="933" width="1" height="3" fill="#fff"/>
<rect x="827" y="933" width="1" height="3" fill="#fff"/>
<rect x="834" y="933" width="1" height="3" fill="#fff"/>
<rect x="840" y="933" width="1" height="3" fill="#fff"/>
<rect x="846" y="933" width="1" height="3" fill="#fff"/>
<rect x="853" y="933" width="1" height="3" fill="#fff"/>
<rect x="859" y="933" width="1" height="3" fill="#fff"/>
<rect x="865" y="933" width="1" height="3" fill="#fff"/>
<rect x="872" y="933" width="1" height="3" fill="#fff"/>
<rect x="878" y="933" width="1" height="5" fill="#fff"/>
<rect x="884" y="933" width="1" height="3" fill="#fff"/>
<rect x="891" y="933" width="1" height="3" fill="#fff"/>
<rect x="897" y="933" width="1" height="3" fill="#fff"/>
<rect x="904" y="933" width="1" height="3" fill="#fff"/>
<rect x="910" y="933" width="1" height="3" fill="#fff"/>
<rect x="916" y="933" width="1" height="3" fill="#fff"/>
<rect x="923" y="933" width="1" height="3" fill="#fff"/>
<rect x="929" y="933" width="1" height="3" fill="#fff"/>
<rect x="935" y="933" width="1" height="3" fill="#fff"/>
<rect x="942" y="933" width="1" height="3" fill="#fff"/>
<rect x="948" y="933" width="1" height="3" fill="#fff"/>
<rect x="954" y="933" width="1" height="5" fill="#fff"/>
<rect x="961" y="933" width="1" height="3" fill="#fff"/>
<rect x="967" y="933" width="1" height="3" fill="#fff"/>
<rect x="974" y="933" width="1" height="3" fill="#fff"/>
<rect x="980" y="933" width="1" height="3" fill="#fff"/>
<rect x="986" y="933" width="1" height="3" fill="#fff"/>
<rect x="993" y="933" width="1" height="3" fill="#fff"/>
<rect x="999" y="933" width="1" height="3" fill="#fff"/>
<rect x="1005" y="933" width="1" height="3" fill="#fff"/>
<rect x="1012" y="933" width="1" height="3" fill="#fff"/>
<rect x="1018" y="933" width="1" height="3" fill="#fff"/>
<rect x="1024" y="933" width="1" height="3" fill="#fff"/>
<rect x="1031" y="933" width="1" height="5" fill="#fff"/>
<rect x="1037" y="933" width="1" height="3" fill="#fff"/>
<rect x="1044" y="933" width="1" height="3" fill="#fff"/>
<rect x="1050" y="933" width="1" height="3" fill="#fff"/>
<rect x="1056" y="933" width="1" height="3" fill="#fff"/>
<rect x="1063" y="933" width="1" height="3" fill="#fff"/>
<rect x="1069" y="933" width="1" height="3" fill="#fff"/>
<rect x="1075" y="933" width="1" height="3" fill="#fff"/>
<rect x="1082" y="933" width="1" height="3" fill="#fff"/>
<rect x="1088" y="933" width="1" height="3" fill="#fff"/>
<rect x="1094" y="933" width="1" height="3" fill="#fff"/>
<rect x="1101" y="933" width="1" height="3" fill="#fff"/>
<rect x="1107" y="933" width="1" height="5" fill="#fff"/>
<rect x="1114" y="933" width="1" height="3" fill="#fff"/>
<rect x="1120" y="933" width="1" height="3" fill="#fff"/>
<rect x="1126" y="933" width="1" height="3" fill="#fff"/>
<rect x="1133" y="933" width="1" height="3" fill="#fff"/>
<rect x="1139" y="933" width="1" height="3" fill="#fff"/>
<rect x="1145" y="933" width="1" height="3" fill="#fff"/>
<rect x="1152" y="933" width="1" height="3" fill="#fff"/>
<rect x="1158" y="933" width="1" height="3" fill="#fff"/>
<rect x="1164" y="933" width="1" height="3" fill="#fff"/>
<rect x="1171" y="933" width="1" height="3" fill="#fff"/>
<rect x="1177" y="933" width="1" height="3" fill="#fff"/>
<rect x="1184" y="933" width="1" height="5" fill="#fff"/>
<rect x="1190" y="933" width="1" height="3" fill="#fff"/>
<rect x="1196" y="933" width="1" height="3" fill="#fff"/>
<rect x="1203" y="933" width="1" height="3" fill="#fff"/>
<rect x="1209" y="933" width="1" height="3" fill="#fff"/>
<rect x="1215" y="933" width="1" height="3" fill="#fff"/>
<rect x="1222" y="933" width="1" height="3" fill="#fff"/>
<rect x="1228" y="933" width="1" height="3" fill="#fff"/>
<rect x="1235" y="933" width="1" height="3" fill="#fff"/>
<rect x="1241" y="933" width="1" height="3" fill="#fff"/>
<rect x="1247" y="933" width="1" height="3" fill="#fff"/>
<rect x="1254" y="933" width="1" height="3" fill="#fff"/>
<rect x="1260" y="933" width="1" height="5" fill="#fff"/>
<rect x="1266" y="933" width="1" height="3" fill="#fff"/>
<rect x="1273" y="933" width="1" height="3" fill="#fff"/>
<rect x="1279" y="933" width="1" height="3" fill="#fff"/>
<rect x="1285" y="933" width="1" height="3" fill="#fff"/>
<rect x="1292" y="933" width="1" height="3" fill="#fff"/>
<rect x="1298" y="933" width="1" height="3" fill="#fff"/>
<rect x="1305" y="933" width="1" height="3" fill="#fff"/>
<rect x="1311" y="933" width="1" height="3" fill="#fff"/>
<rect x="1317" y="933" width="1" height="3" fill="#fff"/>
<rect x="1324" y="933" width="1" height="3" fill="#fff"/>
<rect x="1330" y="933" width="1" height="3" fill="#fff"/>
<rect x="1336" y="933" width="1" height="5" fill="#fff"/>
<rect x="1343" y="933" width="1" height="3" fill="#fff"/>
<rect x="1349" y="933" width="1" height="3" fill="#fff"/>
<rect x="1355" y="933" width="1" height="3" fill="#fff"/>
<rect x="1362" y="933" width="1" height="3" fill="#fff"/>
<rect x="1368" y="933" width="1" height="3" fill="#fff"/>
<rect x="1375" y="933" width="1" height="3" fill="#fff"/>
<rect x="1381" y="933" width="1" height="3" fill="#fff"/>
<rect x="1387" y="933" width="1" height="3" fill="#fff"/>
<rect x="1394" y="933" width="1" height="3" fill="#fff"/>
<rect x="1400" y="933" width="1" height="3" fill="#fff"/>
<rect x="1406" y="933" width="1" height="3" fill="#fff"/>
<rect x="1413" y="933" width="1" height="5" fill="#fff"/>
<rect x="1419" y="933" width="1" height="3" fill="#fff"/>
<rect x="1425" y="933" width="1" height="3" fill="#fff"/>
<rect x="1432" y="933" width="1" height="3" fill="#fff"/>
<rect x="1438" y="933" width="1" height="3" fill="#fff"/>
<rect x="1445" y="933" width="1" height="3" fill="#fff"/>
<rect x="1451" y="933" width="1" height="3" fill="#fff"/>
<rect x="1457" y="933" width="1" height="3" fill="#fff"/>
<rect x="1464" y="933" width="1" height="3" fill="#fff"/>
<rect x="1470" y="933" width="1" height="3" fill="#fff"/>
<rect x="1476" y="933" width="1" height="3" fill="#fff"/>
<rect x="1483" y="933" width="1" height="3" fill="#fff"/>
<rect x="1489" y="933" width="1" height="5" fill="#fff"/>
<rect x="1495" y="933" width="1" height="3" fill="#fff"/>
<rect x="1502" y="933" width="1" height="3" fill="#fff"/>
<rect x="1508" y="933" width="1" height="3" fill="#fff"/>
<rect x="1515" y="933" width="1" height="3" fill="#fff"/>
<rect x="1521" y="933" width="1" height="3" fill="#fff"/>
<rect x="1527" y="933" width="1" height="3" fill="#fff"/>
<rect x="1534" y="933" width="1" height="3" fill="#fff"/>
<rect x="1540" y="933" width="1" height="3" fill="#fff"/>
<rect x="1546" y="933" width="1" height="3" fill="#fff"/>
<rect x="1553" y="933" width="1" height="3" fill="#fff"/>
<rect x="1559" y="933" width="1" height="3" fill="#fff"/>
<rect x="1565" y="933" width="1" height="5" fill="#fff"/>
<rect x="1572" y="933" width="1" height="3" fill="#fff"/>
<rect x="1578" y="933" width="1" height="3" fill="#fff"/>
<rect x="1585" y="933" width="1" height="3" fill="#fff"/>
<rect x="1591" y="933" width="1" height="3" fill="#fff"/>
<rect x="1597" y="933" width="1" height="3" fill="#fff"/>
<rect x="1604" y="933" width="1" height="3" fill="#fff"/>
<rect x="1610" y="933" width="1" height="3" fill="#fff"/>
<rect x="1616" y="933" width="1" height="3" fill="#fff"/>
<rect x="1623" y="933" width="1" height="3" fill="#fff"/>
<rect x="1629" y="933" width="1" height="3" fill="#fff"/>
<rect x="1636" y="933" width="1" height="3" fill="#fff"/>
<rect x="1642" y="933" width="1" height="5" fill="#fff"/>
<rect x="1648" y="933" width="1" height="3" fill="#fff"/>
<rect x="1655" y="933" width="1" height="3" fill="#fff"/>
<rect x="1661" y="933" width="1" height="3" fill="#fff"/>
<rect x="1667" y="933" width="1" height="3" fill="#fff"/>
<rect x="1674" y="933" width="1" height="3" fill="#fff"/>
<rect x="1680" y="933" width="1" height="3" fill="#fff"/>
<rect x="1686" y="933" width="1" height="3" fill="#fff"/>
<rect x="1693" y="933" width="1" height="3" fill="#fff"/>
<rect x="1699" y="933" width="1" height="3" fill="#fff"/>
<rect x="1706" y="933" width="1" height="3" fill="#fff"/>
<rect x="1712" y="933" width="1" height="3" fill="#fff"/>
<rect x="1718" y="933" width="1" height="5" fill="#fff"/>
<rect x="1725" y="933" width="1" height="3" fill="#fff"/>
<rect x="1731" y="933" width="1" height="3" fill="#fff"/>
<rect x="1737" y="933" width="1" height="3" fill="#fff"/>
<rect x="1744" y="933" width="1" height="3" fill="#fff"/>
<rect x="1750" y="933" width="1" height="3" fill="#fff"/>
<rect x="1756" y="933" width="1" height="3" fill="#fff"/>
<rect x="1763" y="933" width="1" height="3" fill="#fff"/>
<rect x="1769" y="933" width="1" height="3" fill="#fff"/>
<rect x="1776" y="933" width="1" height="3" fill="#fff"/>
<rect x="1782" y="933" width="1" height="3" fill="#fff"/>
<rect x="1788" y="933" width="1" height="3" fill="#fff"/>
<rect x="1795" y="933" width="1" height="5" fill="#fff"/>
<rect x="1801" y="933" width="1" height="3" fill="#fff"/>
<rect x="1803" y="933" width="1" height="5" fill="#fff"/>
</svg>
<div class="l" style="left:21.7px;top:51px;width:60px;text-align:center">1942</div>
<div class="l" style="left:82.2px;top:51px;width:60px;text-align:center">2000</div>
<div class="l" style="left:134.3px;top:51px;width:60px;text-align:center">2050</div>
<div class="l" style="left:186.4px;top:51px;width:60px;text-align:center">2100</div>
<div class="l" style="left:238.5px;top:51px;width:60px;text-align:center">2150</div>
<div class="l" style="left:290.6px;top:51px;width:60px;text-align:center">2200</div>
<div class="l" style="left:342.7px;top:51px;width:60px;text-align:center">2250</div>
<div class="l" style="left:394.8px;top:51px;width:60px;text-align:center">2300</div>
<div class="l" style="left:446.9px;top:51px;width:60px;text-align:center">2350</div>
<div class="l" style="left:499.1px;top:51px;width:60px;text-align:center">2400</div>
<div class="l" style="left:551.2px;top:51px;width:60px;text-align:center">2450</div>
<div class="l" style="left:603.3px;top:51px;width:60px;text-align:center">2500</div>
<div class="l" style="left:655.4px;top:51px;width:60px;text-align:center">2550</div>
<div class="l" style="left:707.5px;top:51px;width:60px;text-align:center">2600</div>
<div class="l" style="left:759.6px;top:51px;width:60px;text-align:center">2650</div>
<div class="l" style="left:811.7px;top:51px;width:60px;text-align:center">2700</div>
<div class="l" style="left:863.8px;top:51px;width:60px;text-align:center">2750</div>
<div class="l" style="left:916.0px;top:51px;width:60px;text-align:center">2800</div>
<div class="l" style="left:968.1px;top:51px;width:60px;text-align:center">2850</div>
<div class="l" style="left:1020.2px;top:51px;width:60px;text-align:center">2900</div>
<div class="l" style="left:1072.3px;top:51px;width:60px;text-align:center">2950</div>
<div class="l" style="left:1124.4px;top:51px;width:60px;text-align:center">3000</div>
<div class="l" style="left:1176.5px;top:51px;width:60px;text-align:center">3050</div>
<div class="l" style="left:1228.6px;top:51px;width:60px;text-align:center">3100</div>
<div class="l" style="left:1280.8px;top:51px;width:60px;text-align:center">3150</div>
<div class="l" style="left:1332.9px;top:51px;width:60px;text-align:center">3200</div>
<div class="l" style="left:1385.0px;top:51px;width:60px;text-align:center">3250</div>
<div class="l" style="left:1437.1px;top:51px;width:60px;text-align:center">3300</div>
<div class="l" style="left:1489.2px;top:51px;width:60px;text-align:center">3350</div>
<div class="l" style="left:1541.3px;top:51px;width:60px;text-align:center">3400</div>
<div class="l" style="left:1593.4px;top:51px;width:60px;text-align:center">3450</div>
<div class="l" style="left:1645.5px;top:51px;width:60px;text-align:center">3500</div>
<div class="l" style="left:1697.7px;top:51px;width:60px;text-align:center">3550</div>
<div class="l" style="left:1772.7px;top:51px;width:60px;text-align:center">3622</div>
<div class="l" style="left:0px;top:924.2px;width:44px;text-align:right">0</div>
<div class="l" style="left:0px;top:902.7px;width:44px;text-align:right">5</div>
<div class="l" style="left:0px;top:881.2px;width:44px;text-align:right">10</div>
<div class="l" style="left:0px;top:859.7px;width:44px;text-align:right">15</div>
<div class="l" style="left:0px;top:838.2px;width:44px;text-align:right">20</div>
<div class="l" style="left:0px;top:816.7px;width:44px;text-align:right">25</div>
<div class="l" style="left:0px;top:795.2px;width:44px;text-align:right">30</div>
<div class="l" style="left:0px;top:773.7px;width:44px;text-align:right">35</div>
<div class="l" style="left:0px;top:752.2px;width:44px;text-align:right">40</div>
<div class="l" style="left:0px;top:730.7px;width:44px;text-align:right">45</div>
<div class="l" style="left:0px;top:709.2px;width:44px;text-align:right">50</div>
<div class="l" style="left:0px;top:687.7px;width:44px;text-align:right">55</div>
<div class="l" style="left:0px;top:666.2px;width:44px;text-align:right">60</div>
<div class="l" style="left:0px;top:644.7px;width:44px;text-align:right">65</div>
<div class="l" style="left:0px;top:623.2px;width:44px;text-align:right">70</div>
<div class="l" style="left:0px;top:601.7px;width:44px;text-align:right">75</div>
<div class="l" style="left:0px;top:580.2px;width:44px;text-align:right">80</div>
<div class="l" style="left:0px;top:558.7px;width:44px;text-align:right">85</div>
<div class="l" style="left:0px;top:537.2px;width:44px;text-align:right">90</div>
<div class="l" style="left:0px;top:515.7px;width:44px;text-align:right">95</div>
<div class="l" style="left:0px;top:494.2px;width:44px;text-align:right">100</div>
<div class="l" style="left:0px;top:472.7px;width:44px;text-align:right">105</div>
<div class="l" style="left:0px;top:451.2px;width:44px;text-align:right">110</div>
<div class="l" style="left:0px;top:429.7px;width:44px;text-align:right">115</div>
<div class="l" style="left:0px;top:408.2px;width:44px;text-align:right">120</div>
<div class="l" style="left:0px;top:386.7px;width:44px;text-align:right">125</div>
<div class="l" style="left:0px;top:365.2px;width:44px;text-align:right">130</div>
<div class="l" style="left:0px;top:343.7px;width:44px;text-align:right">135</div>
<div class="l" style="left:0px;top:322.2px;width:44px;text-align:right">140</div>
<div class="l" style="left:0px;top:300.7px;width:44px;text-align:right">145</div>
<div class="l" style="left:0px;top:279.2px;width:44px;text-align:right">150</div>
<div class="l" style="left:0px;top:257.7px;width:44px;text-align:right">155</div>
<div class="l" style="left:0px;top:236.2px;width:44px;text-align:right">160</div>
<div class="l" style="left:0px;top:214.7px;width:44px;text-align:right">165</div>
<div class="l" style="left:0px;top:193.2px;width:44px;text-align:right">170</div>
<div class="l" style="left:0px;top:171.7px;width:44px;text-align:right">175</div>
<div class="l" style="left:0px;top:150.2px;width:44px;text-align:right">180</div>
<div class="l" style="left:0px;top:128.7px;width:44px;text-align:right">185</div>
<div class="l" style="left:0px;top:107.2px;width:44px;text-align:right">190</div>
<div class="l" style="left:0px;top:85.7px;width:44px;text-align:right">195</div>
<div class="l" style="left:0px;top:64.2px;width:44px;text-align:right">200</div>
<div class="l" style="left:12.0px;top:938px;width:80px;text-align:center;transform:scaleX(0.97)">15:35:55.473<br>03/25/2026</div>
<div class="l" style="left:150.6px;top:938px;width:80px;text-align:center;transform:scaleX(0.97)">15:45:00.000<br>03/25/2026</div>
<div class="l" style="left:227.0px;top:938px;width:80px;text-align:center;transform:scaleX(0.97)">15:50:00.000<br>03/25/2026</div>
<div class="l" style="left:303.4px;top:938px;width:80px;text-align:center;transform:scaleX(0.97)">15:55:00.000<br>03/25/2026</div>
<div class="l" style="left:379.8px;top:938px;width:80px;text-align:center;transform:scaleX(0.97)">16:00:00.000<br>03/25/2026</div>
<div class="l" style="left:456.2px;top:938px;width:80px;text-align:center;transform:scaleX(0.97)">16:05:00.000<br>03/25/2026</div>
<div class="l" style="left:532.5px;top:938px;width:80px;text-align:center;transform:scaleX(0.97)">16:10:00.000<br>03/25/2026</div>
<div class="l" style="left:608.9px;top:938px;width:80px;text-align:center;transform:scaleX(0.97)">16:15:00.000<br>03/25/2026</div>
<div class="l" style="left:685.3px;top:938px;width:80px;text-align:center;transform:scaleX(0.97)">16:20:00.000<br>03/25/2026</div>
<div class="l" style="left:761.7px;top:938px;width:80px;text-align:center;transform:scaleX(0.97)">16:25:00.000<br>03/25/2026</div>
<div class="l" style="left:838.1px;top:938px;width:80px;text-align:center;transform:scaleX(0.97)">16:30:00.000<br>03/25/2026</div>
<div class="l" style="left:914.4px;top:938px;width:80px;text-align:center;transform:scaleX(0.97)">16:35:00.000<br>03/25/2026</div>
<div class="l" style="left:990.8px;top:938px;width:80px;text-align:center;transform:scaleX(0.97)">16:40:00.000<br>03/25/2026</div>
<div class="l" style="left:1067.2px;top:938px;width:80px;text-align:center;transform:scaleX(0.97)">16:45:00.000<br>03/25/2026</div>
<div class="l" style="left:1143.6px;top:938px;width:80px;text-align:center;transform:scaleX(0.97)">16:50:00.000<br>03/25/2026</div>
<div class="l" style="left:1220.0px;top:938px;width:80px;text-align:center;transform:scaleX(0.97)">16:55:00.000<br>03/25/2026</div>
<div class="l" style="left:1296.4px;top:938px;width:80px;text-align:center;transform:scaleX(0.97)">17:00:00.000<br>03/25/2026</div>
<div class="l" style="left:1372.7px;top:938px;width:80px;text-align:center;transform:scaleX(0.97)">17:05:00.000<br>03/25/2026</div>
<div class="l" style="left:1449.1px;top:938px;width:80px;text-align:center;transform:scaleX(0.97)">17:10:00.000<br>03/25/2026</div>
<div class="l" style="left:1525.5px;top:938px;width:80px;text-align:center;transform:scaleX(0.97)">17:15:00.000<br>03/25/2026</div>
<div class="l" style="left:1601.9px;top:938px;width:80px;text-align:center;transform:scaleX(0.97)">17:20:00.000<br>03/25/2026</div>
<div class="l" style="left:1678.3px;top:938px;width:80px;text-align:center;transform:scaleX(0.97)">17:25:00.000<br>03/25/2026</div>
<div class="l" style="left:1764.0px;top:938px;width:80px;text-align:center;transform:scaleX(0.97)">17:30:36.754<br>03/25/2026</div>
<div class="l" style="left:1868.5px;top:73px">-5.00</div>
<div class="l" style="left:1868.5px;top:501px">-9.00</div>
<div class="l" style="left:1868.5px;top:929px">-13.00</div>
<div class="l" style="left:1912.5px;top:509px;font-size:11px;transform:translate(-50%,-50%) rotate(90deg)">Amplitude(Log10(g^2/Hz))</div>
<div class="l" style="left:914.5px;top:964px;transform:scaleX(0.82);transform-origin:0 0">Time</div>
<script>
(function(){
var CM=[[0.0,0x28,0x38,0x78],[0.104,0x20,0x50,0x90],[0.167,0x18,0x60,0xa0],[0.195,0x18,0x90,0xc0],[0.222,0x18,0xa8,0xa8],[0.285,0x28,0xa0,0x78],[0.336,0x30,0xa0,0x50],[0.371,0x48,0xa8,0x38],[0.45,0x90,0xc8,0x38],[0.531,0xd8,0xe0,0x20],[0.594,0xf0,0xe8,0x18],[0.615,0xf8,0xc0,0x10],[0.65,0xf8,0xa8,0x18],[0.70,0xf5,0x90,0x20],[0.748,0xf0,0x78,0x20],[0.805,0xe0,0x4a,0x30],[0.876,0xe0,0x20,0x2a],[1.0,0xd4,0x0c,0x6c]];
var CMB=[[0.0,0x28,0x38,0x78],[0.104,0x20,0x50,0x90],[0.167,0x18,0x60,0xa0],[0.195,0x18,0x90,0xc0],[0.222,0x18,0xa8,0xa8],[0.285,0x30,0xa0,0x78],[0.336,0x4a,0x8a,0x58],[0.371,0x48,0xa0,0x38],[0.45,0x90,0xc8,0x38],[0.531,0xd8,0xe0,0x20],[0.594,0xf0,0xe8,0x18],[0.61,0xf8,0xb0,0x10],[0.645,0xf8,0xa0,0x18],[0.748,0xf0,0x78,0x20],[0.805,0xe0,0x4a,0x30],[0.876,0xe0,0x20,0x2a],[1.0,0xd4,0x0c,0x6c]];
function mkLUT(C){var L=new Uint8Array(1024*3);
for(var i=0;i<1024;i++){var t=i/1023;var k=0;while(k<C.length-2&&t>C[k+1][0])k++;var a=C[k],b=C[k+1];var f=(t-a[0])/(b[0]-a[0]);if(f<0)f=0;if(f>1)f=1;
L[i*3]=a[1]+(b[1]-a[1])*f;L[i*3+1]=a[2]+(b[2]-a[2])*f;L[i*3+2]=a[3]+(b[3]-a[3])*f;}return L;}
var LUT=mkLUT(CM),LUTB=mkLUT(CMB);
function cmap(t){var i=Math.round(t*1023);if(i<0)i=0;if(i>1023)i=1023;return i*3;}
var cb=document.getElementById('cbar').getContext('2d');var cid=cb.createImageData(18,857);
for(var y=0;y<857;y++){var o=cmap(1-y/856);for(var x=0;x<18;x++){var p=(y*18+x)*4;cid.data[p]=LUTB[o];cid.data[p+1]=LUTB[o+1];cid.data[p+2]=LUTB[o+2];cid.data[p+3]=255;}}
cb.putImageData(cid,0,0);
var s=123456789;function rnd(){s^=s<<13;s^=s>>>17;s^=s<<5;return ((s>>>0)%1000000)/1000000;}
function gau(){var u=rnd()||1e-6,v=rnd();return Math.sqrt(-2*Math.log(u))*Math.cos(6.2831853*v);}
var SKC=0.25;function skf(g){var v=g-SKC*g*g+SKC;return v<-2.6?-2.6:v;}
var W=1752,H=861,OY=70,OX=52;
var KP=[[70, 0.35], [80, 0.365], [90, 0.4], [100, 0.47], [110, 0.52], [118, 0.545], [128, 0.565], [136, 0.58], [165, 0.58], [180, 0.56], [182, 0.565], [195, 0.54], [230, 0.535], [290, 0.535], [340, 0.525], [358, 0.505], [368, 0.46], [375, 0.43], [400, 0.42], [410, 0.43], [420, 0.46], [435, 0.47], [455, 0.46], [470, 0.41], [485, 0.4], [490, 0.4], [505, 0.38], [512, 0.36], [530, 0.35], [555, 0.345], [570, 0.32], [592, 0.32], [604, 0.34], [614, 0.34], [620, 0.4], [640, 0.385], [665, 0.35], [676, 0.34], [693, 0.335], [697, 0.29], [760, 0.28], [766, 0.4], [775, 0.4], [779, 0.41], [795, 0.4], [802, 0.4], [808, 0.38], [814, 0.36], [818, 0.3], [850, 0.29], [857, 0.33], [862, 0.38], [866, 0.52], [869, 0.63], [872, 0.67], [877, 0.66], [880, 0.56], [885, 0.4], [896, 0.37], [904, 0.4], [907, 0.49], [912, 0.47], [915, 0.33], [925, 0.33], [928, 0.42], [931, 0.42]];
var base=new Float32Array(H);
for(var y=0;y<H;y++){var py=y+OY;var k=0;while(k<KP.length-2&&py>KP[k+1][0])k++;var a=KP[k],b=KP[k+1];var f=(py-a[0])/(b[0]-a[0]);if(f<0)f=0;if(f>1)f=1;base[y]=a[1]+(b[1]-a[1])*f;}
var LN=[[614, 1, 0.56, 0.03], [618, 1, 0.56, 0.03], [670, 1, 0.66, 0.03], [674, 1, 0.64, 0.03], [122, 3, 0.7, 0.02], [135, 2, 0.62, 0.04], [156, 2, 0.615, 0.04], [223, 2, 0.63, 0.03], [301, 5, 0.6, 0.045], [323, 2, 0.61, 0.035], [413, 2, 0.63, 0.03], [429, 3, 0.6, 0.025], [486, 3, 0.59, 0.02], [559, 1, 0.48, 0.05], [567, 3, 0.615, 0.015], [595, 3, 0.575, 0.015], [602, 2, 0.52, 0.03], [616, 3, 0.8, 0.02], [667, 2, 0.59, 0.02], [672, 3, 0.86, 0.015], [695, 3, 0.62, 0.015], [763, 3, 0.585, 0.02], [776, 3, 0.58, 0.015], [796, 1, 0.46, 0.05], [805, 2, 0.66, 0.015, 1057, 1804], [816, 1, 0.45, 0.05], [900, 3, 0.6, 0.03, 529, 712], [900, 3, 0.57, 0.035, 1300, 1727], [910, 2, 0.56, 0.03, 1510, 1727], [921, 2, 0.55, 0.03, 1510, 1727], [802, 1, 0.46, 0.05], [526, 1, 0.42, 0.05], [578, 1, 0.42, 0.05]];
var lineSeg=[];for(var y=0;y<H;y++)lineSeg.push(null);
for(var i=0;i<LN.length;i++){var L=LN[i];var y0=L[0]-OY-Math.floor((L[1]-1)/2);for(var j=0;j<L[1];j++){var yy=y0+j;if(yy>=0&&yy<H){if(!lineSeg[yy])lineSeg[yy]=[];lineSeg[yy].push([L[2],L[3],L[4]||0,L[5]||1804]);}}}
var ctx=document.getElementById('cv').getContext('2d');
var id=ctx.createImageData(W,H);var d=id.data;
// per-column offsets
var colA=new Float32Array(W),colB=new Float32Array(W);var sm=0;
for(var x=0;x<W;x++){sm=0.85*sm+0.15*gau();colA[x]=gau()*0.6+sm*0.8;colB[x]=gau();}
var AR=0.45;
var prev=new Float32Array(W);for(var x=0;x<W;x++)prev[x]=gau();
var DX0=477,GAP0=1171,GAP1=1187;
var SIG=function(py,bt){return bt>0.50?0.056:(bt<0.30?0.042:0.042+(bt-0.30)/0.20*0.018);};
var COLW=function(py){return py>860?0.06:(py>780?0.025:(py>640?0.012:0.006));};
var EXTRA=function(x,y,t,g){return t;};
var RECTS=[[1312, 1348, 655, 669, 0.33, 0.045], [585, 622, 662, 669, 0.36, 0.045], [643, 646, 70, 105, 0.08], [682, 685, 70, 100, 0.06], [1270, 1274, 70, 100, 0.08], [1490, 1499, 70, 100, 0.1], [1727, 1729, 575, 870, 0.2], [1727, 1729, 870, 931, 0.28], [1765, 1767, 820, 931, 0.15], [1777, 1779, 840, 931, 0.13], [1783, 1785, 860, 931, 0.1], [890, 891, 815, 882, 0.15]];
for(var y=0;y<H;y++){
  var py=y+OY;var bt=base[y];
  var sig=SIG(py,bt);SKC=(bt>0.50?0.18:(bt<0.32?-0.06:-0.06+(bt-0.32)/0.18*0.24));
  var cw=COLW(py);
  var ar=py<600?0.22:(py<780?0.4:0.6);var sq=Math.sqrt(1-ar*ar);
  var gl=0;
  for(var x=0;x<W;x++){
    var g0=ar*prev[x]+sq*gau();prev[x]=g0;var g=(g0+0.3*gl)/1.044;gl=g0;
    var p=(y*W+x)*4;
    if(x<DX0||(x>=GAP0&&x<GAP1)){d[p]=255;d[p+1]=255;d[p+2]=255;d[p+3]=255;continue;}
    var px=x+OX;
    var t=bt+skf(g)*sig+colA[x]*cw;
    for(var r=0;r<RECTS.length;r++){var R=RECTS[r];if(!R[5]&&px>=R[0]&&px<R[1]&&py>=R[2]&&py<R[3]){t+=R[4];}}
    var LS=lineSeg[y];if(LS){for(var q=0;q<LS.length;q++){var S=LS[q];if(px>=S[2]&&px<S[3]){var lt=S[0]+skf(g)*S[1];t=lt>t?lt:t;}}}
    for(var r=0;r<RECTS.length;r++){var R=RECTS[r];if(R[5]&&px>=R[0]&&px<R[1]&&py>=R[2]&&py<R[3]){t=R[4]+skf(g)*R[5];}}
    t=EXTRA(px,py,t,g);
    var o=cmap(t);d[p]=LUT[o];d[p+1]=LUT[o+1];d[p+2]=LUT[o+2];d[p+3]=255;
  }
}
// emulate JPEG 4:2:0 chroma subsampling
for(var y=0;y<H-1;y+=2){for(var x=0;x<W-1;x+=2){
  var cbs=0,crs=0;var ps=[(y*W+x)*4,(y*W+x+1)*4,((y+1)*W+x)*4,((y+1)*W+x+1)*4];
  var Ys=[0,0,0,0];
  for(var k=0;k<4;k++){var q=ps[k];var R=d[q],G=d[q+1],B=d[q+2];
    Ys[k]=0.299*R+0.587*G+0.114*B;cbs+=-0.168736*R-0.331264*G+0.5*B;crs+=0.5*R-0.418688*G-0.081312*B;}
  var cba=cbs/4,cra=crs/4;
  for(var k=0;k<4;k++){var q=ps[k];var Y=Ys[k];var R0=d[q],G0=d[q+1],B0=d[q+2];
    var cb=0.6*cba+0.4*(-0.168736*R0-0.331264*G0+0.5*B0),cr=0.6*cra+0.4*(0.5*R0-0.418688*G0-0.081312*B0);
    var R=Y+1.402*cr,G=Y-0.344136*cb-0.714136*cr,B=Y+1.772*cb;
    d[q]=R<0?0:(R>255?255:R);d[q+1]=G<0?0:(G>255?255:G);d[q+2]=B<0?0:(B>255?255:B);}
}}
ctx.putImageData(id,0,0);
})();

</script>
</body></html>
